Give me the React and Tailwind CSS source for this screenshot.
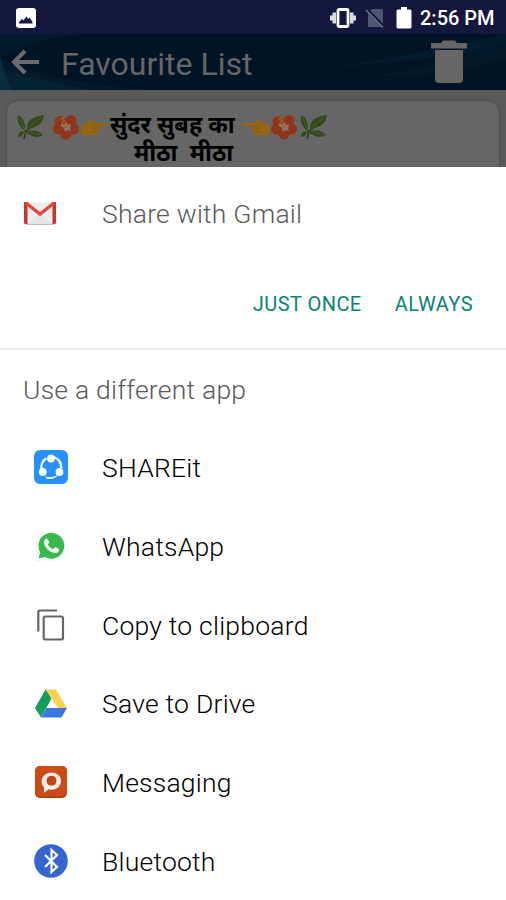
function StatusBar() {
  return (
    <div className="flex h-[34px] shrink-0 items-center bg-[#15173f] pl-4 pr-[10px] pt-px">
      <svg width="20" height="20" viewBox="0 0 20 20">
        <rect width="20" height="20" rx="3" fill="#fff" />
        <path d="M3 15.5v-1.500l3-3 1.500 1.500 3-4 1.500 2.500 1.500-1.500 3 4.500v1.500z" fill="#15173f" />
      </svg>
      <svg className="ml-auto" width="26" height="20" viewBox="0 0 26 20">
        <path d="M0 7.500h2.500v5H0zM2.500 4.500h3.500v11H2.500zM20 4.500h3.500v11H20zM23.500 7.500H26v5h-2.500z" fill="#dcdce4" />
        <rect x="8" y="1.500" width="10" height="17" rx="1" fill="none" stroke="#fff" strokeWidth="2.800" />
      </svg>
      <svg className="ml-[10px]" width="18" height="20" viewBox="0 0 18 20">
        <path d="M6 1h9.500q1.500 0 1.500 1.500V19H3.500q-1.500 0-1.500-1.500V5z" fill="#525473" />
        <path d="M0 1l18 18" stroke="#15173f" strokeWidth="3.500" />
        <path d="M0 2l17 17.500" stroke="#777990" strokeWidth="1.300" />
      </svg>
      <svg className="ml-3" width="16" height="22" viewBox="0 0 16 22">
        <path d="M5 0h6v2.500h3q1.500 0 1.500 1.500v16q0 1.500-1.500 1.500H2Q.5 21.500.5 20V4Q.5 2.500 2 2.500h3z" fill="#fff" />
      </svg>
      <span className="ml-2 w-[76px] whitespace-nowrap text-[20px] font-medium leading-5 text-white">2:56 PM</span>
    </div>
  );
}

function AppBar() {
  return (
    <div className="relative h-14 shrink-0 bg-[#001426]">
      <svg className="absolute inset-0" width="506" height="56" viewBox="0 0 506 56">
        <path d="M0 0h80Q30 6 0 24z" fill="#021a2d" />
        <path d="M0 24Q35 43 110 52L150 56H0z" fill="#021a2c" />
        <path d="M0 23q5 18 12 33H0z" fill="#0c2c40" />
        <path d="M0 36q45 11 90 20H0z" fill="#06293c" opacity=".5" />
        <path d="M330 33Q410 22 506 0v12Q440 26 330 33z" fill="#021b2e" />
        <path d="M370 42Q440 33 506 8v17Q440 43 370 42z" fill="#02192c" />
      </svg>
      <div className="relative flex h-full items-center pl-[11px] pr-[39px]">
        <svg width="29" height="26" viewBox="0 0 29 26">
          <path d="M28 13H3M14 2L3 13l11 11" fill="none" stroke="#6b6b6b" strokeWidth="4" />
        </svg>
        <h1 className="ml-[21px] mt-[3px] whitespace-nowrap text-[32px] leading-10 text-[#666]">Favourite List</h1>
        <svg className="ml-auto" width="36" height="44" viewBox="0 0 36 44">
          <path d="M0 3h10l2-2.500h12L26 3h10v5.500H0zM4 10h28v29q0 4-4 4H8q-4 0-4-4z" fill="#666" />
        </svg>
      </div>
    </div>
  );
}

function Leaf({ className }) {
  return (
    <svg className={className} width="29" height="26" viewBox="0 0 29 26">
      <path d="M8 25L10 16M9 19L25 3M11 19l13 2" stroke="#2c3e14" strokeWidth="1.600" fill="none" />
      <path d="M9 17Q0 11 2 1q8 4 7 16zM11 15Q10 3 28 1q-1 12-17 14zM11 18q8-4 16 3-9 5-16-3zM8 17q-6 0-6 6 5 0 6-6z" fill="#34491a" />
      <path d="M9 16L4 5M13 13L25 3M13 18l11 2.500" stroke="#506329" strokeWidth=".8" />
    </svg>
  );
}

function Flower({ className }) {
  return (
    <svg className={className} width="28" height="26" viewBox="0 0 28 26">
      <g fill="#91351a">
        <circle cx="8" cy="7.500" r="5.500" />
        <circle cx="19" cy="6.500" r="5.500" />
        <circle cx="21.500" cy="15" r="5.500" />
        <circle cx="14" cy="20" r="5.500" />
        <circle cx="6.500" cy="15" r="5.500" />
        <circle cx="14" cy="13" r="7" />
      </g>
      <path d="M9 9l4 2 1-4 2 4 3-1-1 5 1 2-4-1-2 2-1-4-3-2z" fill="#887577" />
      <path d="M14 14L10 3" stroke="#a06b13" strokeWidth="3" strokeDasharray="2 1" />
    </svg>
  );
}

function Hand({ className }) {
  return (
    <svg className={className} width="27" height="18" viewBox="0 0 27 18">
      <path d="M0 8L9 3l3-2 2 1-1 3h14v3H18l-1 8q-1 1-4 1H1z" fill="#956713" />
      <path d="M11 8h6M11 11h6M11 14h5" stroke="#7d530c" strokeWidth=".6" />
    </svg>
  );
}

function QuoteCard() {
  return (
    <div className="h-[77px] shrink-0 bg-[#5a5a5a] px-[7px] pt-[11px]">
      <div className="h-[66px] rounded-t-[12px] bg-[#666] pt-[10px] shadow-[0_0_3px_#444]">
        <div className="flex h-8 items-center pl-[9px] font-['Noto_Sans_Devanagari','Noto_Sans','Roboto',sans-serif] text-[23.5px] font-bold text-black">
          <Leaf />
          <Flower className="ml-[7px]" />
          <Hand className="ml-[1px]" />
          <span className="w-[128px] whitespace-nowrap pl-[2px] pt-[2px] leading-7">सुंदर सुबह का</span>
          <Hand className="ml-[7px] -scale-x-100" />
          <Flower />
          <Leaf className="ml-[1px]" />
        </div>
        <div className="whitespace-pre pl-[127px] pt-px font-['Noto_Sans_Devanagari','Noto_Sans','Roboto',sans-serif] text-[23.5px] font-bold leading-6 text-black">मीठा  मीठा</div>
      </div>
    </div>
  );
}

function GmailIcon() {
  return (
    <svg width="32" height="24" viewBox="0 0 32 24">
      <path d="M1 1h30v22H1z" fill="#ededed" />
      <path d="M4 23l12-11 12 11z" fill="#e3e3e3" />
      <path d="M2 23.500h28" stroke="#bbb" />
      <path d="M0 1h3.500v22H1.500Q0 23 0 21.500zM28.500 1H32v20.500q0 1.500-1.500 1.500h-2z" fill="#c93431" />
      <path d="M2 2l14 11L30 2" fill="none" stroke="#df493d" strokeWidth="3.400" />
    </svg>
  );
}

function ShareitIcon() {
  return (
    <svg width="34" height="34" viewBox="0 0 34 34">
      <rect width="34" height="34" rx="6" fill="#2691fa" />
      <path d="M6.500 20Q5 12 11.500 7.500L13 9Q7.500 13 8.500 20zM20 6q8.500 3 8.500 12l-2 1Q26 11 20 8zM11.500 26.500q7 2 13-2-4 5-10 4.500-3 0-3-2.500z" fill="#fff" />
      <circle cx="17" cy="8.500" r="3.900" fill="#fff" />
      <circle cx="8.800" cy="22" r="3.900" fill="#fff" />
      <circle cx="25.500" cy="22" r="3.900" fill="#fff" />
    </svg>
  );
}

function WhatsappIcon() {
  return (
    <svg width="34" height="34" viewBox="0 0 34 34">
      <path d="M2 32l2-8A14.300 14.300 0 1 1 10.500 30z" fill="#fff" stroke="#ededed" />
      <path d="M4.500 29.500l1.700-6.200A12.900 12.900 0 1 1 11 28z" fill="#39b84b" />
      <path d="M12.300 9.500c-.8 0-2.300 1.400-2.300 3.800 0 4.800 6.200 10.700 11.300 10.700 2.300 0 4-1.600 4-3.300 0-.8-3.500-2.500-4.200-2.500s-1.500 2-2.200 2c-1 0-5-3.600-5-4.700 0-.6 1.300-1.500 1.300-2.100s-1.700-3.900-2.900-3.900z" fill="#fff" />
    </svg>
  );
}

function CopyIcon() {
  return (
    <svg width="34" height="34" viewBox="0 0 34 34" fill="none" stroke="#666" strokeWidth="2.200">
      <path d="M4.300 23.500V4q0-1.500 1.500-1.500H23" />
      <rect x="9.700" y="8.500" width="19.300" height="23" rx="1.800" />
    </svg>
  );
}

function DriveIcon() {
  return (
    <svg width="34" height="34" viewBox="0 0 34 34">
      <path d="M11.500 2.500h10.500l11 18.500h-9z" fill="#fdd04b" />
      <path d="M11.500 2.500l6 9L7 30.500 1 21z" fill="#149d5b" />
      <path d="M12.500 21H33l-5.500 9.500H7z" fill="#3b77e3" />
    </svg>
  );
}

function MessagingIcon() {
  return (
    <svg width="34" height="34" viewBox="0 0 34 34">
      <rect x="1" y="1" width="32" height="32" rx="5" fill="#a93b10" />
      <rect x="1" y="1" width="32" height="30.500" rx="5" fill="#cb4b18" />
      <path d="M17.500 7.500c5.500 0 9.500 3.700 9.500 8.500s-4 8.700-9.500 8.700c-1 0-2-.1-3-.4L10 28v-5.500C8.500 21 7.700 18.500 7.700 16c0-4.800 4.300-8.500 9.800-8.500z" fill="#f5eee9" />
      <circle cx="17.500" cy="15.700" r="5" fill="#c44513" />
    </svg>
  );
}

function BluetoothIcon() {
  return (
    <svg width="34" height="34" viewBox="0 0 34 34">
      <circle cx="17" cy="17" r="16.800" fill="#3565ce" />
      <path d="M11 11l12 12-5.500 5V6l5.500 5-12 12" fill="none" stroke="#fff" strokeWidth="2.200" />
    </svg>
  );
}

const apps = [
  { label: "SHAREit", Icon: ShareitIcon },
  { label: "WhatsApp", Icon: WhatsappIcon },
  { label: "Copy to clipboard", Icon: CopyIcon },
  { label: "Save to Drive", Icon: DriveIcon },
  { label: "Messaging", Icon: MessagingIcon },
  { label: "Bluetooth", Icon: BluetoothIcon },
];

function ShareSheet() {
  return (
    <div className="flex-1 bg-white">
      <div className="flex h-[91px] items-center pl-6 pt-px">
        <GmailIcon />
        <span className="ml-[46px] pt-px text-[26.500px] font-light tracking-[0.23px] text-[#595959]">Share with Gmail</span>
      </div>
      <div className="flex h-[90px] items-center justify-end gap-[33px] pr-[33px] pt-px text-[20px] tracking-[0.45px] text-[#078571]">
        <button>JUST ONCE</button>
        <button>ALWAYS</button>
      </div>
      <div className="h-[2px] bg-[#ebebeb]" />
      <h2 className="flex h-[78px] items-center pl-[23px] pt-px text-[26.500px] font-light tracking-[0.23px] text-[#595959]">Use a different app</h2>
      <ul>
        {apps.map(({ label, Icon }) => (
          <li key={label} className="flex h-[78.75px] items-center pl-[34px]">
            <Icon />
            <span className="ml-[34px] pt-px text-[26.500px] font-light tracking-[0.23px] text-black">{label}</span>
          </li>
        ))}
      </ul>
    </div>
  );
}

export default function App() {
  return (
    <div className="flex h-[900px] w-[506px] flex-col overflow-hidden bg-white font-['Roboto',sans-serif]">
      <StatusBar />
      <AppBar />
      <QuoteCard />
      <ShareSheet />
    </div>
  );
}
